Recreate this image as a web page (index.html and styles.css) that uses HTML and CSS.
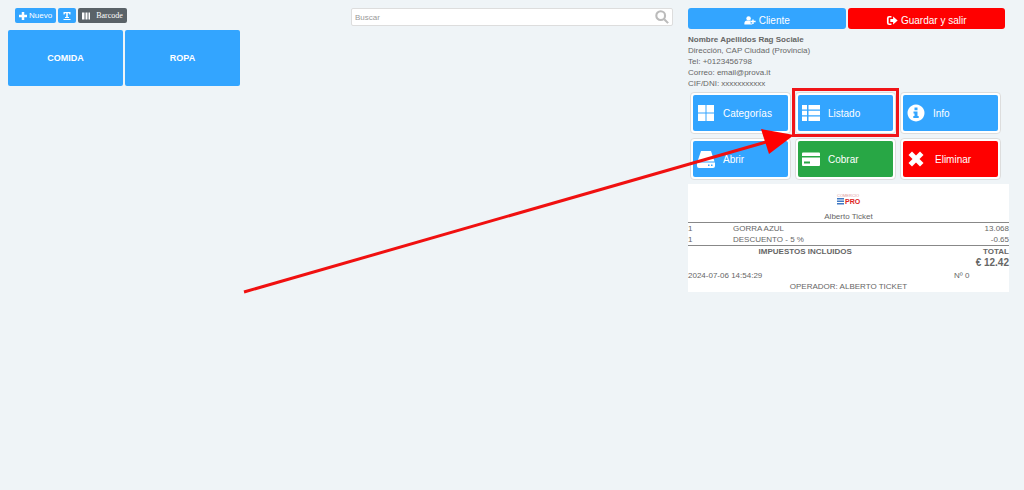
FILE: index.html
```html
<!DOCTYPE html>
<html lang="es">
<head>
  <meta charset="utf-8">
  <title>Ticket</title>
  <link rel="stylesheet" href="styles.css">
</head>
<body>
  <div class="page">
    <div class="catalog">
      <div class="toolbar">
        <div class="tools">
          <button class="tool"><svg class="tool-icon" viewBox="0 0 16 16"><path d="M5.500 0h5v5.500H16v5h-5.500V16h-5v-5.500H0v-5h5.500z"/></svg>Nuevo</button>
          <button class="tool tool-text" aria-label="Texto"><svg class="tool-icon" viewBox="0 0 16 16"><path d="M1 0h14v5h-2l-1-2.500H9.500V10H12v2H4v-2h2.500V2.500H4L3 5H1zM1 14h14v2H1z"/></svg></button>
          <button class="tool tool-barcode"><svg class="tool-icon" viewBox="0 0 16 16"><path d="M0 1h4v14H0zM5 1h1v14H5zM7 1h3v14H7zM11 1h1v14h-1zM13 1h3v14h-3z"/></svg>Barcode</button>
        </div>
        <div class="search">
          <input type="text" placeholder="Buscar" aria-label="Buscar">
          <svg class="search-icon" viewBox="0 0 16 16"><circle cx="6.500" cy="6.500" r="5"/><path d="M10.500 10.500L15 15"/></svg>
        </div>
      </div>
      <div class="categories">
        <button class="category">COMIDA</button>
        <button class="category">ROPA</button>
      </div>
    </div>

    <div class="sale">
      <div class="main-actions">
        <button class="action"><svg class="action-icon" viewBox="0 0 20 16"><circle cx="7.500" cy="4.500" r="4"/><path d="M0 15v-2c0-3 2-5 5-5 1.500 1.300 3.500 1.300 5 0 1.500 0 2.500.5 3.500 1.500H11v4h3V15zM14 6h2.500v2.500H20V11h-3.500v3H14v-3h-2.500V8.500H14z"/></svg>Cliente</button>
        <button class="action danger"><svg class="action-icon" viewBox="0 0 20 16"><path d="M9 0H5Q1 0 1 4v8q0 4 4 4h4v-2.500H5.500Q4 13.500 4 12V4q0-1.500 1.500-1.500H9zM12 1l8 7-8 7v-4.500H7v-5h5z"/></svg>Guardar y salir</button>
      </div>

      <div class="customer">
        <strong>Nombre Apellidos Rag Sociale</strong>
        <div>Dirección, CAP Ciudad (Provincia)</div>
        <div>Tel: +0123456798</div>
        <div>Correo: email@prova.it</div>
        <div>CIF/DNI: xxxxxxxxxxx</div>
      </div>

      <div class="tiles">
        <div class="tile"><button><svg class="tile-icon" viewBox="0 0 18 18"><path d="M1 1h7.500v7.500H1zM9.500 1H17v7.500H9.500zM1 9.500h7.500V17H1zM9.500 9.500H17V17H9.500z"/></svg>Categorías</button></div>
        <div class="tile highlighted">
          <button><svg class="tile-icon" viewBox="0 0 18 18"><path d="M0 1h5v4.500H0zM6.500 1H18v4.500H6.500zM0 6.800h5v4.500H0zM6.500 6.800H18v4.500H6.500zM0 12.500h5V17H0zM6.500 12.500H18V17H6.500z"/></svg>Listado</button>
          <svg class="arrow" viewBox="0 0 552 166"><path class="arrow-line" d="M2 162L524 12"/><path d="M519 -1L552 5L527 24z"/></svg>
        </div>
        <div class="tile"><button><svg class="tile-icon" viewBox="0 0 18 18"><path fill-rule="evenodd" d="M9 0.500a8.500 8.500 0 1 0 .01 0zM7.500 3.500h3v2.700h-3zM6.500 7.500h4v4.500h1.200v2H6.300v-2h1.200V9.500h-1z"/></svg>Info</button></div>
        <div class="tile"><button><svg class="tile-icon" viewBox="0 0 18 18"><path fill-rule="evenodd" d="M4 1h10l3.500 10.500h-17zM0 12.500h18V16q0 2-2 2H2q-2 0-2-2zM11 14.500V16h1.500v-1.500zM14 14.500V16h1.500v-1.500z"/></svg>Abrir</button></div>
        <div class="tile success"><button><svg class="tile-icon" viewBox="0 0 18 18"><path fill-rule="evenodd" d="M1 2.500h16q1 0 1 1V6H0V3.500q0-1 1-1zM0 7.500h18V15q0 1-1 1H1q-1 0-1-1zM2 11.500v2h6v-2z"/></svg>Cobrar</button></div>
        <div class="tile danger"><button><svg class="tile-icon" viewBox="0 0 18 18"><path d="M5 1.500L9 5.500l4-4L16.500 5l-4 4 4 4L13 16.500l-4-4-4 4L1.500 13l4-4-4-4z"/></svg>Eliminar</button></div>
      </div>

      <div class="receipt">
        <svg class="logo" viewBox="0 0 26 12" role="img" aria-label="Comercio Pro">
          <text class="logo-small" x="1" y="4">COMERCIO</text>
          <path d="M1 5h7v1.500H1zM1 7.500h7V9H1zM1 10h7v1.500H1z"/>
          <text class="logo-big" x="9" y="11">PRO</text>
        </svg>
        <div class="receipt-title">Alberto Ticket</div>
        <table class="items">
          <tr><td class="qty">1</td><td>GORRA AZUL</td><td class="price">13.068</td></tr>
          <tr><td class="qty">1</td><td>DESCUENTO - 5 %</td><td class="price">-0.65</td></tr>
        </table>
        <table class="totals">
          <tr><th class="tax">IMPUESTOS INCLUIDOS</th><th class="price">TOTAL</th></tr>
          <tr><th class="amount" colspan="2">€ 12.42</th></tr>
        </table>
        <div class="receipt-info">
          <span>2024-07-06 14:54:29</span>
          <span class="number">Nº 0</span>
        </div>
        <div class="operator">OPERADOR: ALBERTO TICKET</div>
      </div>
    </div>
  </div>
</body>
</html>
```
FILE: styles.css
```css
* {
  box-sizing: border-box;
}

body {
  margin: 0;
  background-color: #eff4f7;
  font-family: "Liberation Sans", Arial, sans-serif;
  font-size: 8px;
  line-height: 11px;
  color: #666;
  overflow-x: hidden;
}

button {
  display: flex;
  align-items: center;
  justify-content: center;
  padding: 0;
  border: none;
  border-radius: 3px;
  background-color: #33a5ff;
  color: white;
  font-family: inherit;
  font-size: 8px;
  cursor: pointer;
}

button:hover {
  opacity: 0.9;
}

svg {
  flex: none;
  fill: currentColor;
}

.page {
  display: grid;
  grid-template-columns: 665fr 321fr;
  gap: 15px;
  padding: 8px 15px 8px 8px;
}

.toolbar {
  display: grid;
  grid-template-columns: 343fr 322fr;
}

.tools {
  display: flex;
  gap: 2px;
  padding-left: 7px;
}

.tool {
  height: 15px;
  gap: 2px;
  padding: 0 4px;
  border-radius: 2px;
}

.tool-icon {
  width: 8px;
  height: 8px;
}

.tool-text {
  padding: 0 5px;
}

.tool-barcode {
  gap: 6px;
  padding: 0 4px;
  background-color: #5a6268;
  font-family: "Liberation Serif", serif;
}

.search {
  position: relative;
  height: 18px;
}

.search input {
  display: block;
  width: 100%;
  height: 100%;
  padding: 0 22px 0 3px;
  border: 1px solid #ddd;
  border-radius: 2px;
  background-color: white;
  font-family: inherit;
  font-size: 8px;
}

.search input::placeholder {
  color: #999;
}

.search-icon {
  position: absolute;
  top: 2px;
  right: 4px;
  width: 14px;
  height: 14px;
  fill: none;
  stroke: #bbb;
  stroke-width: 2.4;
}

.categories {
  display: flex;
  gap: 2px;
  margin-top: 4px;
}

.category {
  width: 115px;
  height: 56px;
  border-radius: 2px;
  font-size: 9px;
  font-weight: bold;
}

.main-actions {
  display: grid;
  grid-template-columns: 1fr 1fr;
  gap: 2px;
  margin-right: 4px;
}

.action {
  height: 21px;
  gap: 3px;
  padding-top: 3px;
  font-size: 10px;
}

.action-icon {
  width: 12px;
  height: 9px;
}

.customer {
  margin-top: 5px;
}

.customer strong {
  display: block;
}

.tiles {
  display: grid;
  grid-template-columns: repeat(3, 1fr);
  gap: 4px;
  margin: 3px 8px 0 2px;
}

.tile {
  position: relative;
  height: 42px;
  padding: 2px;
  border: 1px solid #ddd;
  border-radius: 4px;
  background-color: white;
}

.tile button {
  width: 100%;
  height: 100%;
  justify-content: flex-start;
  gap: 8px;
  padding-left: 4px;
  border-radius: 2px;
  font-size: 10px;
}

.tile-icon {
  width: 18px;
  height: 18px;
}

.danger,
.danger button {
  background-color: #f00;
}

.success button {
  background-color: #28a745;
}

.tile.danger,
.tile.success {
  background-color: white;
}

.tile.danger button {
  gap: 10px;
}

.highlighted {
  z-index: 1;
}

.highlighted::after {
  content: "";
  position: absolute;
  inset: -5px -4px -4px -4px;
  border: 3px solid #f01418;
  pointer-events: none;
}

.arrow {
  position: absolute;
  top: 37px;
  right: 101px;
  width: 552px;
  height: 166px;
  overflow: visible;
  fill: #f00;
  pointer-events: none;
}

.arrow-line {
  stroke: #f01010;
  stroke-width: 3;
}

.receipt {
  margin-top: 4px;
  padding-top: 9px;
  background-color: white;
}

.logo {
  display: block;
  width: 26px;
  height: 12px;
  margin: 0 auto;
  fill: #3f79c4;
}

.logo-small {
  font-size: 4px;
  fill: #d99;
}

.logo-big {
  font-size: 7px;
  font-weight: bold;
  fill: #d22;
}

.receipt-title,
.operator {
  text-align: center;
}

.receipt-title {
  margin-top: 6px;
}

table {
  width: 100%;
  border-collapse: collapse;
}

td,
th {
  padding: 0;
  text-align: left;
}

.items {
  border-top: 1px solid #888;
  border-bottom: 1px solid #888;
}

.qty {
  width: 14%;
}

td.price,
th.price,
th.amount {
  text-align: right;
}

th.tax {
  width: 73%;
  text-align: center;
}

th.amount {
  font-size: 10px;
}

.receipt-info {
  display: flex;
  justify-content: space-between;
  margin-top: 2px;
}

.number {
  width: 55px;
}
```
